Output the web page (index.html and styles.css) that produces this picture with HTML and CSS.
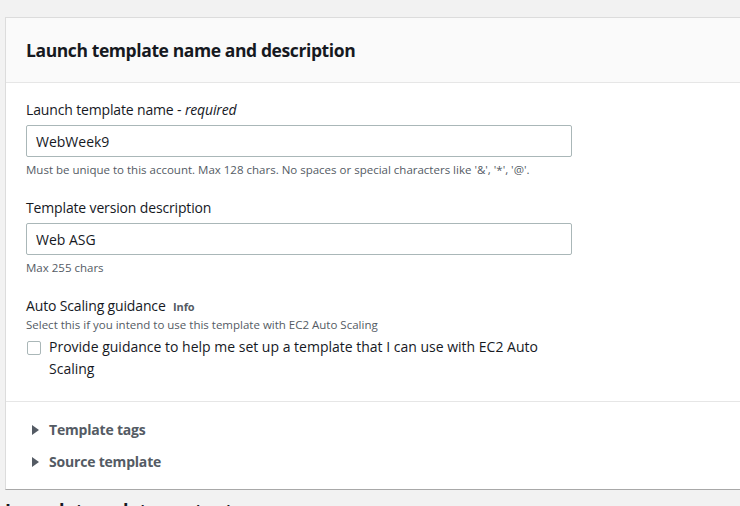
FILE: index.html
```html
<!DOCTYPE html>
<html lang="en">
<head>
<meta charset="utf-8">
<title>Launch template</title>
<link rel="stylesheet" href="styles.css">
</head>
<body>
<div class="page">
  <section class="card">
    <header class="card-header">
      <h2 class="card-title">Launch template name and description</h2>
    </header>
    <div class="card-body">
      <div class="field">
        <div class="label">Launch template name - <i>required</i></div>
        <div class="input">WebWeek9</div>
        <div class="hint">Must be unique to this account. Max 128 chars. No spaces or special characters like '&amp;', '*', '@'.</div>
      </div>
      <div class="field">
        <div class="label">Template version description</div>
        <div class="input">Web ASG</div>
        <div class="hint">Max 255 chars</div>
      </div>
      <div class="field">
        <div class="label">Auto Scaling guidance <span class="info">Info</span></div>
        <div class="hint hint-tight">Select this if you intend to use this template with EC2 Auto Scaling</div>
        <div class="check-row">
          <span class="checkbox"></span>
          <span class="check-text">Provide guidance to help me set up a template that I can use with EC2 Auto Scaling</span>
        </div>
      </div>
    </div>
    <div class="card-expanders">
      <div class="expander"><span class="caret"></span>Template tags</div>
      <div class="expander"><span class="caret"></span>Source template</div>
    </div>
  </section>
  <h2 class="next-title">Launch template contents</h2>
</div>
</body>
</html>
```
FILE: styles.css
```css
html, body {
  margin: 0;
  padding: 0;
  background: #f2f2f2;
  overflow: hidden;
  height: 506px;
}
body {
  font-family: "Open Sans", "Noto Sans", sans-serif;
  color: #16191f;
}
.page {
  padding: 17px 0 0 5px;
}
.card {
  width: 760px;
  background: #ffffff;
  border: 1px solid #dcdcdc;
  border-bottom: 1px solid #a8a8a8;
  border-right: none;
  box-sizing: border-box;
}
.card-header {
  background: #fafafa;
  height: 65px;
  border-bottom: 1px solid #e6e6e6;
  display: flex;
  align-items: center;
  padding-left: 20px;
  box-sizing: border-box;
}
.card-title {
  margin: 0;
  font-size: 17.5px;
  font-weight: 700;
  letter-spacing: -0.4px;
}
.card-body {
  padding: 16px 20px 21px;
  border-bottom: 1px solid #e6e6e6;
}
.field + .field {
  margin-top: 19px;
}
.label {
  font-size: 14px;
  line-height: 22px;
  letter-spacing: -0.15px;
}
.label i {
  font-style: italic;
}
.info {
  font-size: 11px;
  font-weight: 700;
  color: #545b64;
  margin-left: 4px;
}
.input {
  margin-top: 4px;
  width: 546px;
  height: 32px;
  box-sizing: border-box;
  border: 1px solid #aab7b8;
  border-radius: 2px;
  padding: 0 9px;
  font-size: 14px;
  display: flex;
  align-items: center;
}
.hint {
  font-size: 11.5px;
  line-height: 16px;
  color: #545b64;
  margin-top: 5px;
}
.hint-tight {
  margin-top: -1px;
}
.check-row {
  display: flex;
  align-items: flex-start;
  margin-top: 3px;
}
.checkbox {
  flex: none;
  width: 12px;
  height: 12px;
  border: 1px solid #aab7b8;
  border-radius: 2px;
  margin: 5px 8px 0 1px;
  background: #fff;
}
.check-text {
  font-size: 14px;
  line-height: 22px;
  width: 490px;
}
.card-expanders {
  padding: 17px 20px 16px;
  display: flex;
  flex-direction: column;
  gap: 10px;
}
.expander {
  font-size: 14px;
  font-weight: 700;
  line-height: 22px;
  color: #545b64;
  letter-spacing: -0.2px;
  display: flex;
  align-items: center;
}
.caret {
  width: 0;
  height: 0;
  border-left: 7px solid #545b64;
  border-top: 5px solid transparent;
  border-bottom: 5px solid transparent;
  margin: 0 10px 0 6px;
}
.next-title {
  margin: 8px 0 0;
  font-size: 18px;
  font-weight: 700;
}
```
